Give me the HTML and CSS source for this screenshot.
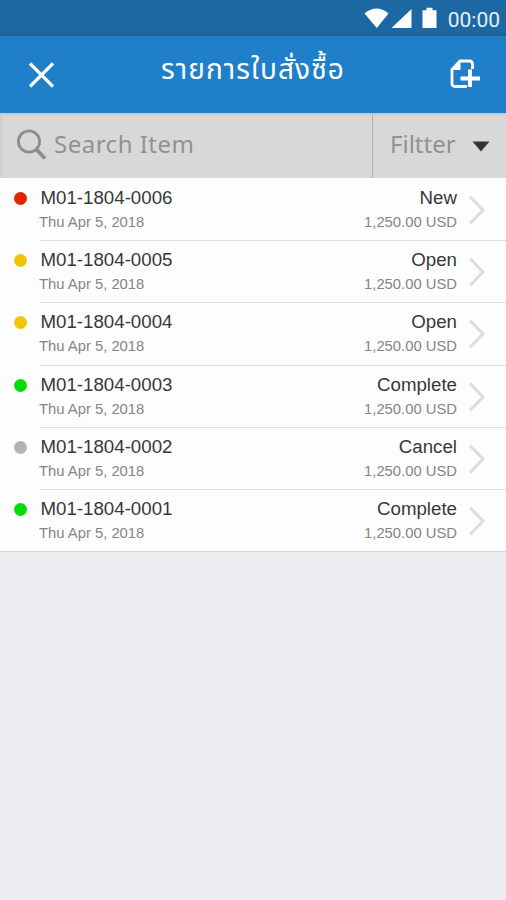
FILE: index.html
```html
<!DOCTYPE html>
<html lang="th">
<head>
<meta charset="utf-8">
<title>รายการใบสั่งซื้อ</title>
<link rel="stylesheet" href="styles.css">
</head>
<body>
<div class="status">
  <svg class="status-icons" width="76" height="24" viewBox="0 0 76 24">
    <path d="M0.500 6.500Q12.500-3.500 24.500 6.500L12.800 21Z"/>
    <path d="M27.500 21H47.500V2Z"/>
    <path d="M58.500 3.200H62.500V0.800H68.500V3.200H72.500V21H58.500Z"/>
  </svg>
  <span class="clock">00:00</span>
</div>
<header class="header">
  <svg class="close" width="26" height="26" viewBox="0 0 26 26"><path d="M2 1.500L25 24.500M25 1.500L2 24.500"/></svg>
  <h1 class="title">รายการใบสั่งซื้อ</h1>
  <svg class="add" width="32" height="32" viewBox="0 0 32 32">
    <path d="M23.500 10V5Q23.500 2 20.500 2H11L3 10.500V24.500Q3 27.500 6 27.500H18"/>
    <path class="fold" d="M11 1.500V10.500H3Z"/>
    <path class="plus" d="M21 10.500V28M11.500 19.500H31"/>
  </svg>
</header>
<div class="toolbar">
  <div class="search">
    <svg class="lens" width="32" height="32" viewBox="0 0 32 32"><circle cx="12" cy="12.500" r="10.600"/><path class="handle" d="M19.500 20.500L28 29.500"/></svg>
    <span class="search-label">Search Item</span>
  </div>
  <div class="filter">
    <span class="filter-label">Filtter</span>
    <svg class="caret" width="18" height="11" viewBox="0 0 18 11"><path d="M0.500 0.500H17.500L9 10.500Z"/></svg>
  </div>
</div>
<main class="list">
  <div class="row"><i class="dot red"></i><div class="item"><div class="info"><span class="code">M01-1804-0006</span><span class="date">Thu Apr 5, 2018</span></div><div class="info end"><span class="state">New</span><span class="price">1,250.00 USD</span></div><svg class="chevron" width="18" height="30" viewBox="0 0 18 30"><path d="M2 1.500L15 15L2 28.500"/></svg></div></div>
  <div class="row"><i class="dot yellow"></i><div class="item"><div class="info"><span class="code">M01-1804-0005</span><span class="date">Thu Apr 5, 2018</span></div><div class="info end"><span class="state">Open</span><span class="price">1,250.00 USD</span></div><svg class="chevron" width="18" height="30" viewBox="0 0 18 30"><path d="M2 1.500L15 15L2 28.500"/></svg></div></div>
  <div class="row"><i class="dot yellow"></i><div class="item"><div class="info"><span class="code">M01-1804-0004</span><span class="date">Thu Apr 5, 2018</span></div><div class="info end"><span class="state">Open</span><span class="price">1,250.00 USD</span></div><svg class="chevron" width="18" height="30" viewBox="0 0 18 30"><path d="M2 1.500L15 15L2 28.500"/></svg></div></div>
  <div class="row"><i class="dot green"></i><div class="item"><div class="info"><span class="code">M01-1804-0003</span><span class="date">Thu Apr 5, 2018</span></div><div class="info end"><span class="state">Complete</span><span class="price">1,250.00 USD</span></div><svg class="chevron" width="18" height="30" viewBox="0 0 18 30"><path d="M2 1.500L15 15L2 28.500"/></svg></div></div>
  <div class="row"><i class="dot gray"></i><div class="item"><div class="info"><span class="code">M01-1804-0002</span><span class="date">Thu Apr 5, 2018</span></div><div class="info end"><span class="state">Cancel</span><span class="price">1,250.00 USD</span></div><svg class="chevron" width="18" height="30" viewBox="0 0 18 30"><path d="M2 1.500L15 15L2 28.500"/></svg></div></div>
  <div class="row"><i class="dot green"></i><div class="item"><div class="info"><span class="code">M01-1804-0001</span><span class="date">Thu Apr 5, 2018</span></div><div class="info end"><span class="state">Complete</span><span class="price">1,250.00 USD</span></div><svg class="chevron" width="18" height="30" viewBox="0 0 18 30"><path d="M2 1.500L15 15L2 28.500"/></svg></div></div>
</main>
</body>
</html>
```
FILE: styles.css
```css
* { box-sizing: border-box; }
body {
  margin: 0;
  height: 900px;
  overflow: hidden;
  background: #ebedf1;
  font-family: "Liberation Sans", Arial, sans-serif;
}
svg { display: block; flex: none; fill: none; }
.status {
  display: flex;
  justify-content: flex-end;
  height: 36px;
  padding: 7px 6px 0 0;
  background: linear-gradient(#1c68a3 0, #1c68a3 32px, #1b5f94 36px);
}
.status-icons { margin-right: 8px; fill: #fff; }
.clock {
  color: #e4f0fa;
  font: 21px/26px Roboto, sans-serif;
}
.header {
  display: flex;
  align-items: center;
  justify-content: space-between;
  height: 77px;
  padding: 0 25px 0 28px;
  background: #207fc9;
}
.close { stroke: #fff; stroke-width: 3.2; }
.title {
  margin: 0 0 0 3px;
  padding-bottom: 7px;
  color: #fff;
  font: 28px/40px "Noto Sans Thai", "Noto Sans", sans-serif;
  letter-spacing: 1.1px;
  white-space: nowrap;
}
.add { stroke: #fff; stroke-width: 2.8; }
.add .fold { fill: #fff; stroke-width: 1; }
.add .plus { stroke-width: 4; }
.toolbar {
  display: flex;
  height: 65px;
  background: #d8d8d8;
  border-top: 2px solid #c8cbce;
  color: #929292;
  font: 24px/30px "Noto Sans", sans-serif;
}
.search {
  display: flex;
  align-items: center;
  width: 373px;
  padding: 0 0 6px 15px;
  border-right: 1px solid #b0b0b0;
  border-left: 2px solid #cfcfcf;
}
.search-label { letter-spacing: 0.5px; }
.lens { margin: 2px 5px 0 0; stroke: #8d8d8d; stroke-width: 2.8; }
.lens .handle { stroke-width: 4; }
.filter {
  display: flex;
  flex: 1;
  align-items: center;
  justify-content: space-between;
  padding: 0 16px 6px 17px;
}
.caret { margin-top: 5px; fill: #343434; }
.list {
  display: grid;
  grid-template-rows: repeat(6, 1fr);
  height: 374px;
  background: #fdfdfd;
  border-bottom: 1px solid #d5d7da;
}
.row { display: flex; }
.dot {
  flex: none;
  width: 13px;
  height: 13px;
  margin: 14px 13px 0 14px;
  border-radius: 50%;
}
.red { background: #e32300; }
.yellow { background: #f1c506; }
.green { background: #05dc0c; }
.gray { background: #b3b3b3; }
.item {
  display: flex;
  flex: 1;
  padding-right: 20px;
  box-shadow: 0 1px #dedede;
}
.row:last-child .item { box-shadow: none; }
.info { display: flex; flex-direction: column; flex: 1; padding-top: 8px; }
.code, .state { color: #383838; font-size: 18.700px; line-height: 24px; white-space: nowrap; }
.date, .price { color: #858585; font-size: 14.800px; line-height: 24px; white-space: nowrap; }
.code { margin-left: 0.500px; }
.date { margin-left: -1px; }
.end { align-items: flex-end; }
.chevron { margin: 17px 0 0 11px; stroke: #dedede; stroke-width: 3.2; }
```
